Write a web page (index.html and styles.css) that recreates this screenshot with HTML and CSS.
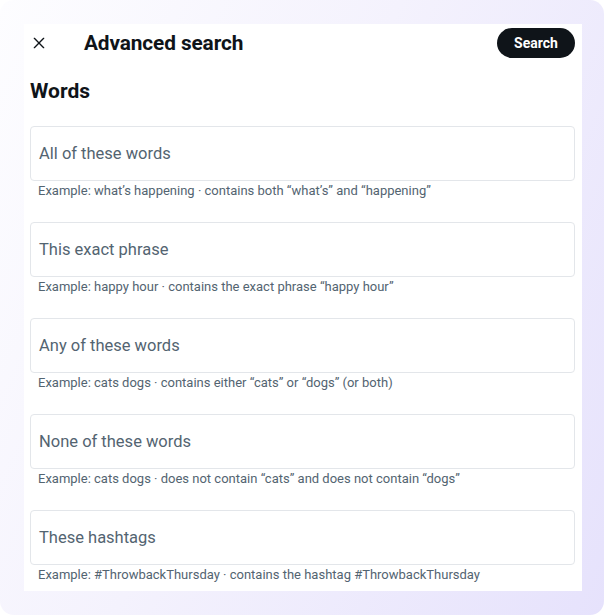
FILE: index.html
```html
<!DOCTYPE html>
<html lang="en">
<head>
<meta charset="utf-8">
<title>Advanced search</title>
<link rel="stylesheet" href="styles.css">
</head>
<body>
<div class="frame">
  <div class="panel">
    <header class="topbar">
      <button class="close" aria-label="Close">
        <svg viewBox="0 0 24 24" width="16" height="16"><path d="M5 5 L19 19 M19 5 L5 19" stroke="#0f1419" stroke-width="2" fill="none" stroke-linecap="round"/></svg>
      </button>
      <h1 class="title">Advanced search</h1>
      <button class="search-btn">Search</button>
    </header>
    <h2 class="section">Words</h2>
    <div class="fields">
      <div class="field">
        <div class="input">All of these words</div>
        <p class="hint">Example: what’s happening · contains both “what’s” and “happening”</p>
      </div>
      <div class="field">
        <div class="input">This exact phrase</div>
        <p class="hint">Example: happy hour · contains the exact phrase “happy hour”</p>
      </div>
      <div class="field">
        <div class="input">Any of these words</div>
        <p class="hint">Example: cats dogs · contains either “cats” or “dogs” (or both)</p>
      </div>
      <div class="field">
        <div class="input">None of these words</div>
        <p class="hint">Example: cats dogs · does not contain “cats” and does not contain “dogs”</p>
      </div>
      <div class="field">
        <div class="input">These hashtags</div>
        <p class="hint">Example: #ThrowbackThursday · contains the hashtag #ThrowbackThursday</p>
      </div>
    </div>
  </div>
</div>
</body>
</html>
```
FILE: styles.css
```css
* { box-sizing: border-box; }
html, body { margin: 0; padding: 0; background: #ffffff; }
body { font-family: Roboto, "Liberation Sans", sans-serif; color: #0f1419; }

.frame {
  width: 604px;
  height: 615px;
  border-radius: 14px;
  background: linear-gradient(115deg, #fdfdff 0%, #f4f2fd 45%, #e6e2fc 100%);
  padding: 24px 22px 24px 24px;
}

.panel {
  width: 558px;
  height: 567px;
  background: #ffffff;
  padding: 0 7px 0 6px;
  display: flex;
  flex-direction: column;
}

.topbar {
  height: 38px;
  display: flex;
  align-items: center;
}

.close {
  border: 0;
  background: none;
  padding: 0;
  margin-left: 1px;
  width: 16px;
  height: 16px;
  display: flex;
}

.title {
  margin: 0 0 0 37px;
  font-size: 20.8px;
  font-weight: 700;
  letter-spacing: -0.1px;
  flex: 1;
}

.search-btn {
  border: 0;
  background: #0f1419;
  color: #ffffff;
  font-family: inherit;
  font-size: 14px;
  font-weight: 700;
  width: 78px;
  height: 30px;
  border-radius: 15px;
  margin-top: -1px;
}

.section {
  margin: 17px 0 0 0;
  font-size: 21px;
  line-height: 24px;
  font-weight: 700;
}

.fields {
  margin-top: 23px;
  display: flex;
  flex-direction: column;
  gap: 23px;
}

.input {
  height: 55px;
  border: 1px solid #e3e6ea;
  border-radius: 4px;
  padding-left: 8px;
  display: flex;
  align-items: center;
  font-size: 16.5px;
  color: #536471;
}

.hint {
  margin: 2px 0 0 8px;
  font-size: 13px;
  line-height: 16px;
  color: #536471;
}
```
